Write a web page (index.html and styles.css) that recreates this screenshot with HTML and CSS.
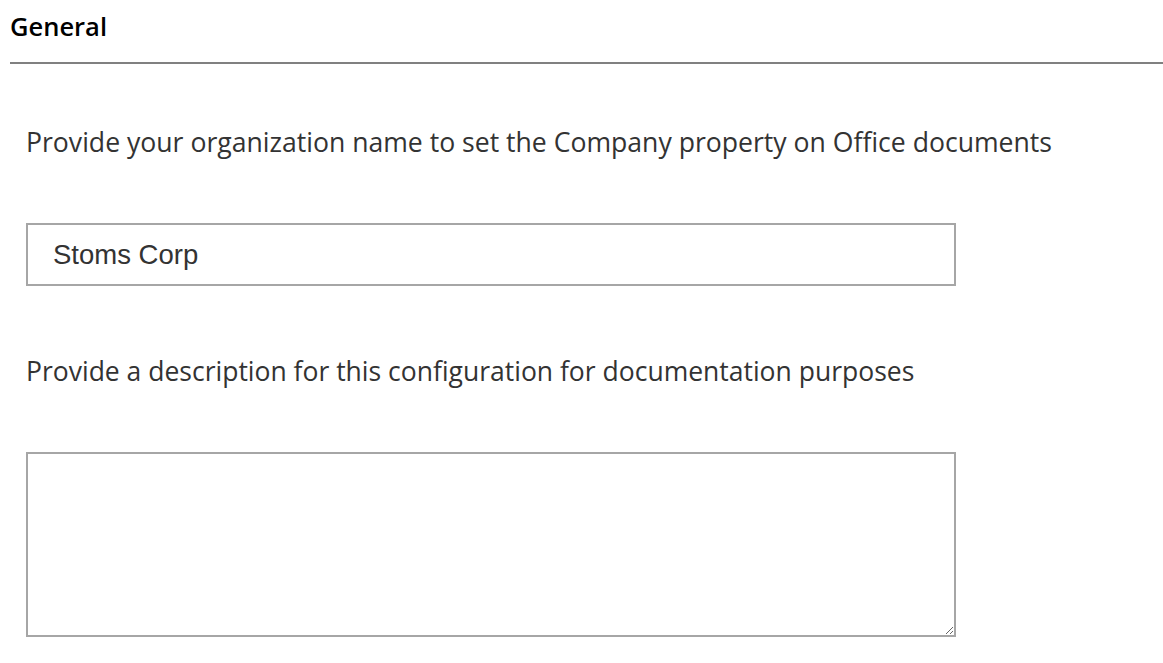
FILE: index.html
```html
<!DOCTYPE html>
<html>
<head>
<meta charset="utf-8">
<link rel="stylesheet" href="styles.css">
</head>
<body>
<div class="page">
  <div class="section-header">
    <h2 class="section-title">General</h2>
  </div>
  <div class="section-body">
    <label class="field-label" for="company">Provide your organization name to set the Company property on Office documents</label>
    <input class="text-input" id="company" type="text" value="Stoms Corp">
    <label class="field-label second" for="desc">Provide a description for this configuration for documentation purposes</label>
    <textarea class="text-area" id="desc"></textarea>
  </div>
</div>
</body>
</html>
```

FILE: styles.css
```css
html, body {
  margin: 0;
  padding: 0;
  background: #ffffff;
}
.page {
  width: 1163px;
  height: 663px;
  overflow: hidden;
  font-family: "Open Sans", "Noto Sans", sans-serif;
}
.section-header {
  margin-left: 10px;
  border-bottom: 2px solid #808080;
  padding-top: 8px;
  height: 64px;
  box-sizing: border-box;
}
.section-title {
  margin: 0;
  font-size: 25.5px;
  font-weight: 600;
  line-height: 36px;
  color: #000;
}
.section-body {
  display: flex;
  flex-direction: column;
  align-items: flex-start;
  padding-left: 26px;
}
.field-label {
  display: block;
  margin-top: 60px;
  font-size: 26.6px;
  line-height: 36px;
  color: #333;
}
.field-label.second {
  margin-top: 67px;
  font-size: 26.5px;
}
.text-input {
  margin-top: 63px;
  width: 930px;
  height: 63px;
  box-sizing: border-box;
  border: 2px solid #a6a6a6;
  padding: 0 0 0 25px;
  font-family: "Liberation Sans", Arial, sans-serif;
  font-size: 27.5px;
  color: #333;
  outline: none;
}
.text-area {
  margin-top: 63px;
  width: 930px;
  height: 185px;
  box-sizing: border-box;
  border: 2px solid #a6a6a6;
  font-family: "Liberation Sans", Arial, sans-serif;
  font-size: 27px;
  resize: both;
  outline: none;
}
```
